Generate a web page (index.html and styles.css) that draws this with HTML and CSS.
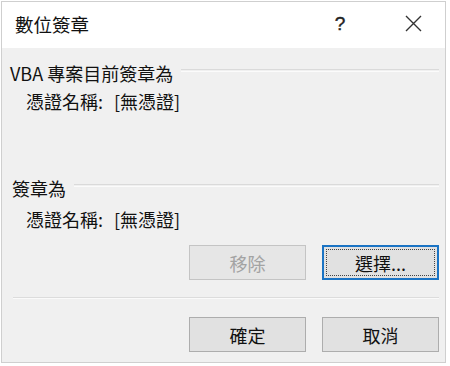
FILE: index.html
```html
<!DOCTYPE html>
<html lang="zh-Hant">
<head>
<meta charset="utf-8">
<link rel="stylesheet" href="styles.css">
</head>
<body>
<div class="dialog">
  <div class="titlebar">
    <div class="title">數位簽章</div>
    <div class="help">?</div>
    <div class="close">
      <svg width="17" height="17" viewBox="0 0 17 17"><path d="M1 1 L16 16 M16 1 L1 16" stroke="#333" stroke-width="1.4" fill="none"/></svg>
    </div>
  </div>
  <div class="body">
    <div class="group-head"><span>VBA 專案目前簽章為</span><div class="rule"></div></div>
    <div class="cert">憑證名稱:<span class="val">[無憑證]</span></div>
    <div class="group-head second"><span>簽章為</span><div class="rule"></div></div>
    <div class="cert second">憑證名稱:<span class="val">[無憑證]</span></div>
    <div class="btn-row">
      <button class="btn disabled">移除</button>
      <button class="btn focused"><span class="focus-ring">選擇...</span></button>
    </div>
    <div class="sep"></div>
    <div class="btn-row last">
      <button class="btn">確定</button>
      <button class="btn">取消</button>
    </div>
  </div>
</div>
</body>
</html>
```

FILE: styles.css
```css
html, body {
  margin: 0;
  padding: 0;
  background: #ffffff;
}
body {
  font-family: "Noto Sans CJK TC", "Noto Sans", sans-serif;
  color: #111111;
  width: 450px;
  height: 366px;
  padding: 1px 2px 0 1px;
  box-sizing: border-box;
}
.dialog {
  width: 445px;
  height: 362px;
  border: 1px solid #cfcfcf;
  box-sizing: border-box;
  display: flex;
  flex-direction: column;
  background: #f0f0f0;
}
.titlebar {
  height: 46px;
  background: #ffffff;
  display: flex;
  align-items: center;
  flex: none;
}
.title {
  font-size: 18.5px;
  padding-left: 13px;
  flex: 1;
  margin-top: -2px;
}
.help {
  font-family: "Liberation Sans", sans-serif;
  font-size: 19px;
  width: 20px;
  text-align: center;
  color: #222;
  margin-right: 55px;
  margin-top: -2px;
  -webkit-text-stroke: 0.4px #222;
}
.close {
  width: 17px;
  height: 17px;
  margin-right: 23px;
  margin-top: -4px;
}
.close svg { display: block; }
.body {
  flex: 1;
  padding: 13px 6px 0 8px;
  display: flex;
  flex-direction: column;
  font-size: 18px;
}
.group-head {
  height: 24px;
  display: flex;
  align-items: center;
}
.group-head span {
  white-space: nowrap;
  line-height: 24px;
}
.group-head.second {
  margin-top: 63px;
  padding-left: 2px;
}
.rule {
  flex: 1;
  height: 1px;
  border-top: 1px solid #dadada;
  border-bottom: 1px solid #fbfbfb;
  margin-left: 8px;
  margin-top: -5px;
  margin-right: 0;
}
.cert {
  height: 24px;
  line-height: 24px;
  padding-left: 16px;
  margin-top: 4px;
  white-space: nowrap;
}
.cert.second {
  margin-top: 7px;
}
.val {
  margin-left: 11px;
}
.btn-row {
  display: flex;
  justify-content: flex-end;
  gap: 16px;
  margin-top: 14px;
  padding-right: 0;
}
.btn-row.last {
  margin-top: 18px;
}
.btn {
  width: 117px;
  height: 35px;
  font-family: "Noto Sans CJK TC", "Noto Sans", sans-serif;
  font-size: 18px;
  color: #111111;
  background: #e1e1e1;
  border: 1px solid #adadad;
  padding: 0;
  margin: 0;
  display: flex;
  align-items: center;
  justify-content: center;
  box-sizing: border-box;
}
.btn.disabled {
  color: #a3a3a3;
  background: #e6e6e6;
  border-color: #c4c4c4;
}
.btn.focused {
  border: 2px solid #1b74c4;
  padding: 2px;
}
.focus-ring {
  flex: 1;
  align-self: stretch;
  border: 1px dotted #444;
  display: flex;
  align-items: center;
  justify-content: center;
}
.sep {
  height: 0;
  border-top: 1px solid #dcdcdc;
  border-bottom: 1px solid #fafafa;
  margin: 17px 0 0 3px;
}
```
